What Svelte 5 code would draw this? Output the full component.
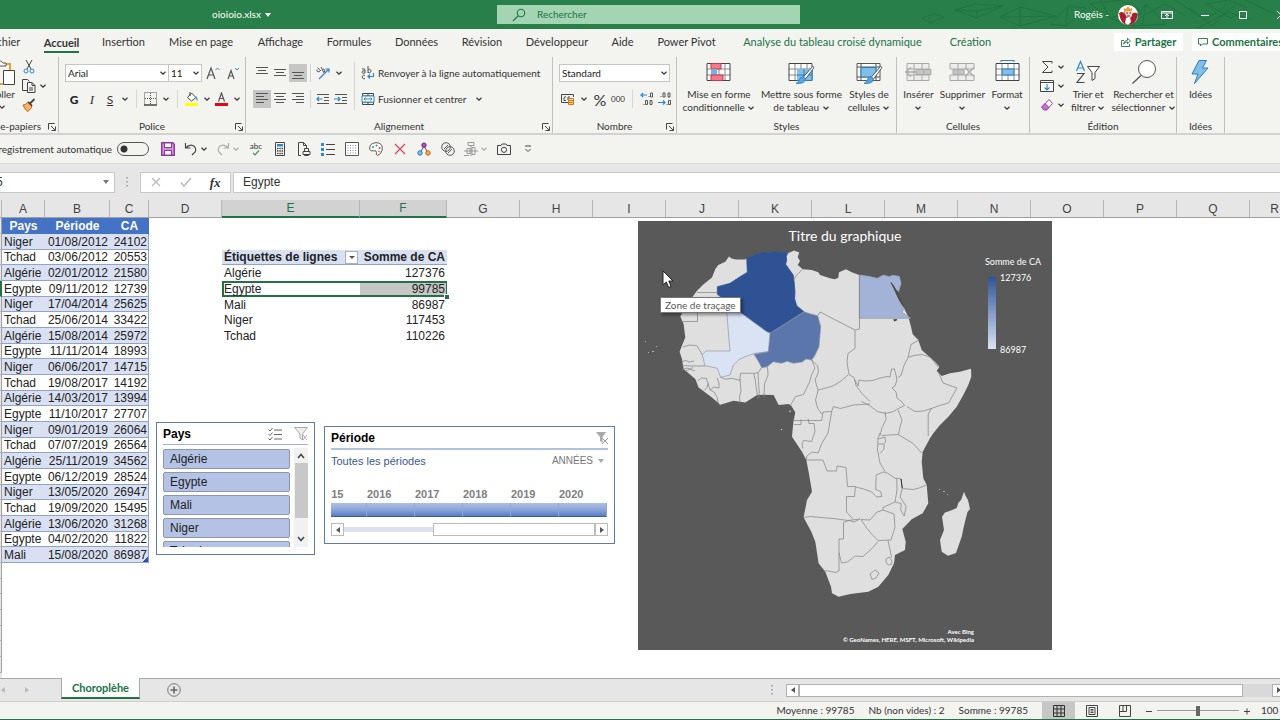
<script>
  const tabs = [
    'Fichier', 'Accueil', 'Insertion', 'Mise en page', 'Affichage', 'Formules', 'Données',
    'Révision', 'Développeur', 'Aide', 'Power Pivot', 'Analyse du tableau croisé dynamique', 'Création'
  ];
  const contextTabs = ['Analyse du tableau croisé dynamique', 'Création'];

  const columns = 'ABCDEFGHIJKLMNOPQR'.split('');
  const rowNumbers = Array.from({ length: 29 }, (_, i) => i + 1);

  const records = [
    ['Niger', '01/08/2012', 24102],
    ['Tchad', '03/06/2012', 20553],
    ['Algérie', '02/01/2012', 21580],
    ['Egypte', '09/11/2012', 12739],
    ['Niger', '17/04/2014', 25625],
    ['Tchad', '25/06/2014', 33422],
    ['Algérie', '15/08/2014', 25972],
    ['Egypte', '11/11/2014', 18993],
    ['Niger', '06/06/2017', 14715],
    ['Tchad', '19/08/2017', 14192],
    ['Algérie', '14/03/2017', 13994],
    ['Egypte', '11/10/2017', 27707],
    ['Niger', '09/01/2019', 26064],
    ['Tchad', '07/07/2019', 26564],
    ['Algérie', '25/11/2019', 34562],
    ['Egypte', '06/12/2019', 28524],
    ['Niger', '13/05/2020', 26947],
    ['Tchad', '19/09/2020', 15495],
    ['Algérie', '13/06/2020', 31268],
    ['Egypte', '04/02/2020', 11822],
    ['Mali', '15/08/2020', 86987]
  ];

  // pivot table starts on row 4, under its header
  const pivot = {
    4: ['Algérie', 127376],
    5: ['Egypte', 99785],
    6: ['Mali', 86987],
    7: ['Niger', 117453],
    8: ['Tchad', 110226]
  };

  const countries = ['Algérie', 'Egypte', 'Mali', 'Niger', 'Tchad'];
  const years = ['2015', '2016', '2017', '2018', '2019', '2020'];
  const selectedRow = 5;

  let autoSave = $state(false);
  let zoom = $state(100);
</script>

{#snippet chev()}
  <svg class="chev" width="8" height="8" viewBox="0 0 8 8"><path d="M1.5 2.8 4 5.2 6.5 2.8" fill="none" stroke="currentColor" stroke-width="1.2" /></svg>
{/snippet}

{#snippet launcher()}
  <button class="launcher" aria-label="Plus d'options">
    <svg width="8" height="8" viewBox="0 0 8 8"><path d="M.5 6.5V.5h6M3 3l4 4M7.5 3.5v4h-4" fill="none" stroke="#444" /></svg>
  </button>
{/snippet}

{#snippet lines(rows)}
  <svg width="14" height="14" viewBox="0 0 14 14">
    {#each rows as [x, y, w]}
      <path d="M{x} {y}.5h{w}" stroke="#555" />
    {/each}
  </svg>
{/snippet}

{#snippet tableGrid()}
  <path d="M1 3.5h23v17H1z" fill="#fff" />
  <path d="M1 9h23M1 15h23M7 3.5v17M13 3.5v17M19 3.5v17" stroke="#888" />
  <path d="M1 3.5h23v17H1z" fill="none" stroke="#444" />
{/snippet}

{#snippet brush()}
  <path d="M25.300 6.500q.8.600.3 1.700L17.500 19l-2.200-1.800L24 7q.7-.8 1.300-.5z" fill="#fff" stroke="#555" />
  <path d="M15 16.800l2.400 2q.2 5.200-9.400 4.700 2.500-1 3.200-3.600.8-3 3.800-3.100z" fill="#5aa5e0" stroke="#2b7cbf" stroke-width=".8" />
{/snippet}

<div class="viewport">
  <div class="window">
    <header class="titlebar">
      <div class="filename">oioioio.xlsx <svg width="6" height="4" viewBox="0 0 6 4"><path d="M0 0h6L3 4z" fill="#fff" /></svg></div>
      <label class="search">
        <svg width="14" height="14" viewBox="0 0 14 14"><path d="M1 13l5-5M5.300 5a3.700 3.700 0 1 0 7.400 0 3.700 3.700 0 0 0-7.400 0" fill="none" stroke="#217346" stroke-width="1.100" /></svg>
        <input type="text" placeholder="Rechercher" />
      </label>
      <div class="account">
        <svg class="pattern" width="380" height="29" viewBox="0 0 380 29" fill="none" stroke="#1e6c3d">
          <path d="M22 18l12-4 10 3-14 6zM55 10l20-6 28 2-26 12zM55 10l22 1 26-5M77 11v7M100 17l20-10 36 9-36 10zM120 7v19M100 17l56-1M150 24l18-18 18 2-20 18zM168 6l-2 20M190 4l30-4 20 10-30 8zM200 0l10 18 22 8M232 26l14-22 20 20zM246 4l-4 22M225 26l40-22 20 12M275 0l30 20 20-14M298 28l30-16 24 8M307 4l22-4 18 8-16 10zM345 0l30 14M290 8l22 18 24-22" />
        </svg>
        <span class="user">Rogéis -</span>
        <svg class="avatar" width="22" height="22" viewBox="0 0 22 22">
          <circle cx="11" cy="11" r="10" fill="#fff" />
          <path d="M2 9q4-3 7 2l4 1q4-6 8-2-1 6-4 9-6 4-11 0-3-3-4-10z" fill="#a61f2e" />
          <path d="M7 4l2 1 2-3 2 3 2-1v5H7z" fill="#e59a3c" />
          <path d="M8 7h7v5q-3 4-6 0z" fill="#f5d6c0" />
          <path d="M9 14l4-1 1 5-3 3-3-2z" fill="#fff" />
          <path d="M9 9h2M12.500 9h1.500M10 12h3" stroke="#7c2030" />
        </svg>
        <button class="win-btn" aria-label="Options du ruban"><svg width="12" height="10" viewBox="0 0 12 10"><path d="M.5 1.500h11v7H.5zM.5 3h11M6 8V4.500M4 6l2-2 2 2" fill="none" stroke="#fff" /></svg></button>
        <button class="win-btn" aria-label="Réduire"><svg width="10" height="10" viewBox="0 0 10 10"><path d="M1 5.500h8" stroke="#fff" /></svg></button>
        <button class="win-btn" aria-label="Agrandir"><svg width="10" height="10" viewBox="0 0 10 10"><path d="M1.500 1.500h7v7h-7z" fill="none" stroke="#fff" /></svg></button>
        <button class="win-btn" aria-label="Fermer"><svg width="10" height="10" viewBox="0 0 10 10"><path d="M1 1l8 8M9 1 1 9" stroke="#fff" /></svg></button>
      </div>
    </header>

    <nav class="tabs">
      {#each tabs as tab}
        <button class="tab" class:active={tab === 'Accueil'} class:context={contextTabs.includes(tab)}><span>{tab}</span></button>
      {/each}
      <div class="share">
        <button class="share-btn">
          <svg width="10" height="10" viewBox="0 0 10 10"><path d="M3 3.500H.5v6h8V7M2.500 7q.5-3.500 4-3.700V1.200L9.500 4l-3 2.700V5Q4 5 2.500 7z" fill="none" stroke="#217346" stroke-width=".9" /></svg>
          Partager
        </button>
        <button class="share-btn comments">
          <svg width="10" height="10" viewBox="0 0 10 10"><path d="M.5 1.500h9v5.500h-5L2.500 9V7h-2z" fill="none" stroke="#217346" stroke-width=".9" /></svg>
          Commentaires
        </button>
      </div>
    </nav>

    <div class="ribbon">
      <section class="group clipboard">
        <div class="body">
          <button class="big paste">
            <svg width="28" height="26" viewBox="0 0 28 26">
              <path d="M3 4h19v6M3 4v20h12" fill="none" stroke="#e2a33d" stroke-width="2" />
              <path d="M7 6V3h3q2.500-4 5 0h3v3z" fill="#fff" stroke="#555" />
              <path d="M15.500 10.500h11v14h-11z" fill="#fff" stroke="#444" />
            </svg>
            <span>Coller</span>
            {@render chev()}
          </button>
          <div class="mini-stack">
            <button aria-label="Couper"><svg width="14" height="14" viewBox="0 0 14 14"><path d="M4 0l5 9M10 0 5 9" stroke="#444" fill="none" /><circle cx="4" cy="11" r="2" fill="none" stroke="#2f86c9" /><circle cx="10" cy="11" r="2" fill="none" stroke="#2f86c9" /></svg></button>
            <button aria-label="Copier"><svg width="14" height="14" viewBox="0 0 14 14"><path d="M5 11.500H.5v-11h5l2 2M5.500 3.500h4.500l3 3v7H5.500zM10 3.500v3h3M7 9h4M7 11h4" fill="none" stroke="#444" /></svg>{@render chev()}</button>
            <button aria-label="Reproduire la mise en forme"><svg width="14" height="14" viewBox="0 0 14 14"><path d="M12.500 1 8 5.500M6 4l4 4" stroke="#444" stroke-width="1.800" /><path d="M5.500 4.500 10 9l-4 4.500Q3 12 1 7q3 0 4.500-2.500z" fill="#f6b26b" stroke="#c8661c" /></svg></button>
          </div>
        </div>
        <footer><span>Presse-papiers</span>{@render launcher()}</footer>
      </section>

      <section class="group font">
        <div class="body rows">
          <div class="row">
            <div class="combo family"><select aria-label="Police"><option>Arial</option></select>{@render chev()}</div>
            <div class="combo size"><select aria-label="Taille"><option>11</option></select>{@render chev()}</div>
            <button class="ico wide" aria-label="Agrandir la police"><svg width="14" height="14" viewBox="0 0 14 14" fill="none"><path d="M1 13 5 2l4 11M2.500 9h5" stroke="#555" stroke-width="1.200" /><path d="M9.500 4l2-2 2 2" stroke="#2f86c9" /></svg></button>
            <button class="ico" aria-label="Réduire la police"><svg width="14" height="14" viewBox="0 0 14 14" fill="none"><path d="M2 13 5 4.500 8 13M3 10h4" stroke="#555" stroke-width="1.200" /><path d="M9 2l2 2 2-2" stroke="#2f86c9" /></svg></button>
          </div>
          <div class="row">
            <button class="ico bold" aria-label="Gras">G</button>
            <button class="ico italic" aria-label="Italique">I</button>
            <button class="ico underline" aria-label="Souligné">S</button>
            <button class="drop" aria-label="Options de soulignement">{@render chev()}</button>
            <i class="sep"></i>
            <button class="ico" aria-label="Bordures"><svg width="14" height="14" viewBox="0 0 14 14"><path d="M.5 12.500V.5h12v12M6.500 1v12M1 6.500h12" fill="none" stroke="#555" stroke-dasharray="1 1" /><path d="M0 13h13" stroke="#444" stroke-width="1.500" /></svg></button>
            <button class="drop" aria-label="Options de bordures">{@render chev()}</button>
            <i class="sep"></i>
            <button class="ico" aria-label="Remplissage"><svg width="14" height="14" viewBox="0 0 14 14"><path d="M6.500 1 11 5.500 6.500 9 2.500 5.500zM5 0v4" fill="#fff" stroke="#444" /><path d="M11 4q2.500 3 1 5-1-1-1-5z" fill="#2f86c9" /><path d="M0 11h13v3H0z" fill="#ff0" /></svg></button>
            <button class="drop" aria-label="Couleurs de remplissage">{@render chev()}</button>
            <button class="ico" aria-label="Couleur de police"><svg width="14" height="14" viewBox="0 0 14 14"><path d="M3.500 9.500 6.500 1l3 8.500M4.500 6.500h4" fill="none" stroke="#555" stroke-width="1.200" /><path d="M0 11h13v3H0z" fill="#e30613" /></svg></button>
            <button class="drop" aria-label="Couleurs de police">{@render chev()}</button>
          </div>
        </div>
        <footer><span>Police</span>{@render launcher()}</footer>
      </section>

      <section class="group align">
        <div class="body align-body">
          <div class="rows left">
            <div class="row">
              <button class="ico" aria-label="Aligner en haut">{@render lines([[1, 1, 12], [3, 4, 8], [1, 7, 12]])}</button>
              <button class="ico" aria-label="Aligner au centre">{@render lines([[1, 3, 12], [3, 6, 8], [1, 9, 12]])}</button>
              <button class="ico pressed" aria-label="Aligner en bas">{@render lines([[1, 6, 12], [3, 9, 8], [1, 12, 12]])}</button>
              <i class="sep"></i>
              <button class="ico" aria-label="Orientation"><svg width="14" height="14" viewBox="0 0 14 14"><path d="M3 13 13 3M9.500 3H13v3.500" fill="none" stroke="#2f86c9" stroke-width="1.200" /><path d="M1 3.500a1.600 1.600 0 1 0 3 1M1.500 1.500 5 5M5 1l3 6M6 4a1.500 1.500 0 1 1 2 2" fill="none" stroke="#555" /></svg></button>
              <button class="drop" aria-label="Options d'orientation">{@render chev()}</button>
            </div>
            <div class="row">
              <button class="ico pressed" aria-label="Aligner à gauche">{@render lines([[1, 1, 12], [1, 4, 8], [1, 7, 12], [1, 10, 8]])}</button>
              <button class="ico" aria-label="Centrer">{@render lines([[1, 1, 12], [3, 4, 8], [1, 7, 12], [3, 10, 8]])}</button>
              <button class="ico" aria-label="Aligner à droite">{@render lines([[1, 1, 12], [5, 4, 8], [1, 7, 12], [5, 10, 8]])}</button>
              <i class="sep"></i>
              <button class="ico" aria-label="Diminuer le retrait"><svg width="14" height="14" viewBox="0 0 14 14"><path d="M1 2.500h12M8 5.500h5M8 8.500h5M1 11.500h12" stroke="#555" /><path d="M6.500 7H1M3 5 1 7l2 2" fill="none" stroke="#2f86c9" stroke-width="1.200" /></svg></button>
              <button class="ico" aria-label="Augmenter le retrait"><svg width="14" height="14" viewBox="0 0 14 14"><path d="M1 2.500h12M8 5.500h5M8 8.500h5M1 11.500h12" stroke="#555" /><path d="M0 7h6M4 5l2 2-2 2" fill="none" stroke="#2f86c9" stroke-width="1.200" /></svg></button>
            </div>
          </div>
          <i class="sep tall"></i>
          <div class="rows">
            <button class="row text-btn">
              <svg width="14" height="14" viewBox="0 0 14 14" fill="none" stroke="#555"><path d="M1 3q3-1 3 1v3q-3 1-3-.8T4 4.700M7 0v7M7 4a1.700 1.700 0 1 1 0 2M4 9.500a1.800 1.800 0 1 0 0 3" /><path d="M12.500 7v3.500H7M9 8.500l-2 2 2 2" stroke="#2f86c9" stroke-width="1.200" /></svg>
              Renvoyer à la ligne automatiquement
            </button>
            <button class="row text-btn">
              <svg width="14" height="14" viewBox="0 0 14 14" fill="none"><path d="M1.500 1.500h11v11h-11zM1.500 4h11M1.500 10h11M7 1.500V4M7 10v2.500" stroke="#444" /><path d="M1 4h12v6H1z" fill="#fff" stroke="#2f86c9" /><path d="M3 7h8M4.500 5.500 3 7l1.500 1.500M9.500 5.500 11 7 9.500 8.500" stroke="#2f86c9" /></svg>
              Fusionner et centrer
              <span class="merge-chev">{@render chev()}</span>
            </button>
          </div>
        </div>
        <footer><span>Alignement</span>{@render launcher()}</footer>
      </section>

      <section class="group number">
        <div class="body rows">
          <div class="row">
            <div class="combo format"><select aria-label="Format de nombre"><option>Standard</option></select>{@render chev()}</div>
          </div>
          <div class="row">
            <button class="ico" aria-label="Format comptable"><svg width="14" height="14" viewBox="0 0 14 14"><path d="M8 10.500H.5v-8h12V5M5 4.500q-3 0-2 4h2M7 8V5h2" fill="none" stroke="#444" /><path d="M7.500 6.500h5v6h-5zM7.500 8.500h5M7.500 10.500h5" fill="#fbd7a5" stroke="#d9761a" /></svg></button>
            <button class="drop" aria-label="Formats comptables">{@render chev()}</button>
            <button class="ico percent" aria-label="Style de pourcentage">%</button>
            <button class="ico thousands" aria-label="Séparateur de milliers">000</button>
            <i class="sep"></i>
            <button class="ico" aria-label="Ajouter une décimale"><svg width="14" height="14" viewBox="0 0 14 14" fill="none" stroke="#555"><path d="M7 3H1M3 1 1 3l2 2" stroke="#2f86c9" stroke-width="1.200" /><path d="M9 5V4M10.500 1h2v4h-2zM4 13v-1M5.500 8.500h2v4h-2zM10 8.500h2v4h-2z" /></svg></button>
            <button class="ico" aria-label="Réduire les décimales"><svg width="14" height="14" viewBox="0 0 14 14" fill="none" stroke="#555"><path d="M3 5V4M5 1h2v4H5zM10 1h2v4h-2zM9 13v-1M10.500 8.500h2v4h-2z" /><path d="M0 10.500h7M5 8.500l2 2-2 2" stroke="#2f86c9" stroke-width="1.200" /></svg></button>
          </div>
        </div>
        <footer><span>Nombre</span>{@render launcher()}</footer>
      </section>

      <section class="group styles">
        <div class="body bigs">
          <button class="big">
            <svg width="25" height="24" viewBox="0 0 25 24">{@render tableGrid()}<path d="M5 3.500h10v5.500H5z" fill="#f5788a" stroke="#c43b50" /><path d="M5 9h6v6H5z" fill="#6fb3e8" /><path d="M5 15h12v5.500H5z" fill="#f5788a" stroke="#c43b50" /></svg>
            <span>Mise en forme<br />conditionnelle {@render chev()}</span>
          </button>
          <button class="big">
            <svg width="27" height="24" viewBox="0 0 27 24">{@render tableGrid()}<path d="M9 9h15v11.500H9z" fill="#83bdea" /><path d="M16 9v11M9 15h15M24 9v11.500H9" fill="none" stroke="#2b7cbf" />{@render brush()}</svg>
            <span>Mettre sous forme<br />de tableau {@render chev()}</span>
          </button>
          <button class="big">
            <svg width="27" height="24" viewBox="0 0 27 24"><path d="M1 3.500h23v17H1zM1 7h23M1 17h23M5 3.500v17M20 3.500v17" fill="#fff" stroke="#555" /><path d="M5 7.500h15v9.500H5z" fill="#83bdea" stroke="#2b7cbf" />{@render brush()}</svg>
            <span>Styles de<br />cellules {@render chev()}</span>
          </button>
        </div>
        <footer><span>Styles</span></footer>
      </section>

      <section class="group cells">
        <div class="body bigs">
          <button class="big">
            <svg width="27" height="24" viewBox="0 0 27 24" fill="#ededeb" stroke="#aaa"><path d="M2 3.500h22v17H2zM2 9h22M2 15h22M9 3.500v17M17 3.500v17" /><path d="M11 9.500h15v5H11zM19 9.500v5" fill="#c4c4c4" /><path d="M11 12H1M6 7.500.8 12 6 16.500" fill="none" stroke-width="1.300" /></svg>
            <span>Insérer<br />{@render chev()}</span>
          </button>
          <button class="big">
            <svg width="27" height="24" viewBox="0 0 27 24" fill="#ededeb" stroke="#aaa"><path d="M1 3.500h24v5.500H1zM1 15h24v5.500H1zM9 3.500V9M17 3.500V9M9 15v5.500M17 15v5.500" /><path d="M4 9.500h11v5H4zM9 9.500v5" fill="#c4c4c4" /><path d="M16 7.500l9 9M25 7.500l-9 9" fill="none" stroke-width="1.300" /></svg>
            <span>Supprimer<br />{@render chev()}</span>
          </button>
          <button class="big">
            <svg width="25" height="24" viewBox="0 0 25 24">{@render tableGrid()}<path d="M7 9h12v6H7z" fill="#83bdea" stroke="#2b7cbf" /><path d="M6 .5h13M6 0v2M19 0v2" stroke="#2f86c9" /></svg>
            <span>Format<br />{@render chev()}</span>
          </button>
        </div>
        <footer><span>Cellules</span></footer>
      </section>

      <section class="group editing">
        <div class="body edit-body">
          <div class="mini-stack">
            <button aria-label="Somme automatique"><svg width="14" height="14" viewBox="0 0 14 14"><path d="M12 3.500v-2H2.500L8 7l-5.500 5.500H12v-2" fill="none" stroke="#444" /></svg>{@render chev()}</button>
            <button aria-label="Recopier"><svg width="14" height="14" viewBox="0 0 14 14"><path d="M.5 1.500h13v11H.5zM.5 3.500h13" fill="#fff" stroke="#444" /><path d="M7 5v6M4.500 8.500 7 11l2.500-2.500" fill="none" stroke="#2f86c9" stroke-width="1.200" /></svg>{@render chev()}</button>
            <button aria-label="Effacer"><svg width="14" height="14" viewBox="0 0 14 14"><path d="M9 1.500l3.500 4-6 6.500-4-3.500z" fill="#fff" stroke="#9b3fa8" /><path d="M5 5.500l4 4L6.500 12H4L1.500 9z" fill="#c274cc" stroke="#9b3fa8" /></svg>{@render chev()}</button>
          </div>
          <button class="big sort">
            <svg width="26" height="24" viewBox="0 0 26 24" fill="none"><path d="M1.500 11 5.500 1.500 9.500 11M3 8h5" stroke="#2f86c9" stroke-width="1.200" /><path d="M2 13.500h7L2 22.500h7.500" stroke="#444" stroke-width="1.200" /><path d="M12.500 6.500h12l-4.500 6v6l-3 2v-8z" fill="#fff" stroke="#444" /></svg>
            <span>Trier et<br />filtrer {@render chev()}</span>
          </button>
          <button class="big find">
            <svg width="26" height="24" viewBox="0 0 26 24"><circle cx="16" cy="9" r="8.500" fill="#fff" stroke="#555" /><path d="M10 15.500 1.500 23.500" stroke="#555" stroke-width="1.200" /></svg>
            <span>Rechercher et<br />sélectionner {@render chev()}</span>
          </button>
        </div>
        <footer><span>Édition</span></footer>
      </section>

      <section class="group ideas">
        <div class="body bigs">
          <button class="big">
            <svg width="20" height="24" viewBox="0 0 20 24"><path d="M9 .5h7.500l-4 7.500h5.500L4.500 23.500 8 14H2z" fill="#83bdea" stroke="#2b7cbf" /></svg>
            <span>Idées</span>
          </button>
        </div>
        <footer><span>Idées</span></footer>
      </section>
    </div>

    <div class="quick">
      <label class="autosave">Enregistrement automatique <input type="checkbox" bind:checked={autoSave} /></label>
      <button aria-label="Enregistrer"><svg width="14" height="14" viewBox="0 0 14 14"><path d="M.7 .7h11l1.600 1.600v11H.7z" fill="#d98be0" stroke="#8b3a9b" stroke-width="1.400" /><path d="M3.500 1h7v4.500h-7zM3.500 8.500h7V13h-7z" fill="#fff" stroke="#8b3a9b" /></svg></button>
      <button class="with-drop" aria-label="Annuler"><svg width="14" height="14" viewBox="0 0 14 14"><path d="M1.500 1v5h5M1.500 6q5-5 9-1.500 3 4-1 7L8 13" fill="none" stroke="#444" stroke-width="1.200" /></svg>{@render chev()}</button>
      <button class="with-drop muted" aria-label="Rétablir"><svg width="14" height="14" viewBox="0 0 14 14"><path d="M12.500 1v5h-5M12.500 6q-5-5-9-1.500-3 4 1 7L6 13" fill="none" stroke="#aaa" stroke-width="1.200" /></svg>{@render chev()}</button>
      <button class="spell" aria-label="Orthographe"><span>abc</span><svg width="8" height="6" viewBox="0 0 8 6"><path d="M1 3l2 2 4-4.500" fill="none" stroke="#3a9b4b" stroke-width="1.200" /></svg></button>
      <button aria-label="Calculatrice"><svg width="12" height="14" viewBox="0 0 12 14"><path d="M1.500.5h9v13h-9z" fill="#fff" stroke="#444" /><path d="M3 2h6v2.500H3z" fill="#2f86c9" /><path d="M3 6.500h1.500M5.300 6.500h1.500M7.500 6.500H9M3 9h1.500M5.300 9h1.500M7.500 9H9M3 11.500h1.500M5.300 11.500h1.500M7.500 11.500H9" stroke="#444" stroke-width="1.500" /></svg></button>
      <button aria-label="Aperçu avant impression"><svg width="14" height="14" viewBox="0 0 14 14" fill="none" stroke="#444"><path d="M4 13.500H1.500V.5h5l3 3V6M6.500.5v3h3" /><path d="M6 9.500h7v3H6zM7.500 9V6.500h4V9M7.500 12v1.500h4V12" /></svg></button>
      <button aria-label="Liste à puces"><svg width="14" height="14" viewBox="0 0 14 14"><path d="M5 2.500h9M5 7.500h9M5 12.500h9" stroke="#444" /><path d="M0 1h3v3H0zM0 6h3v3H0zM0 11h3v3H0z" fill="#2f86c9" /></svg></button>
      <button aria-label="Quadrillage"><svg width="14" height="14" viewBox="0 0 14 14"><path d="M.5.500h13v13H.5z" fill="#fff" stroke="#555" /><path d="M2.500 3.500h10M2.500 6h10M2.500 8.500h10M2.500 11h10" stroke="#888" stroke-dasharray="1 1.500" /></svg></button>
      <button aria-label="Couleurs"><svg width="14" height="14" viewBox="0 0 14 14"><path d="M7 .7q6 0 6.300 5.300Q13 12 8.500 13.300q-2-.3-1-2.800 0-2.500-3-1.700Q.7 9.500.7 6 1 1 7 .7z" fill="#fff" stroke="#555" /><circle cx="4" cy="5" r="1" fill="#3a9b4b" /><circle cx="7.500" cy="3.500" r="1" fill="#2f86c9" /><circle cx="10.500" cy="6" r="1" fill="#c43b50" /><circle cx="10" cy="9.500" r="1" fill="#e08a2c" /></svg></button>
      <button aria-label="Supprimer"><svg width="12" height="12" viewBox="0 0 12 12"><path d="M1 1l10 10M11 1 1 11" stroke="#e04858" stroke-width="1.300" /></svg></button>
      <button aria-label="Relations"><svg width="14" height="14" viewBox="0 0 14 14"><path d="M7 4 3 11M7 4l4 7" stroke="#555" /><circle cx="7" cy="3.200" r="2.200" fill="#b04cc0" stroke="#7a2c88" /><circle cx="3" cy="11" r="2.200" fill="#7cc0f0" stroke="#2b7cbf" /><circle cx="11" cy="11" r="2.200" fill="#f4a94c" stroke="#c8661c" /></svg></button>
      <button aria-label="Formes"><svg width="14" height="14" viewBox="0 0 14 14" fill="none" stroke="#555"><circle cx="5" cy="5" r="4.300" /><circle cx="9" cy="9" r="4.300" /><path d="M3 7l4-4M7 11l4-4" /></svg></button>
      <button class="with-drop muted" aria-label="Aligner les objets"><svg width="14" height="14" viewBox="0 0 14 14" fill="none" stroke="#999"><path d="M4 .5h6v3H4zM3 6.500h3v5H3zM8 5.500h3v7H8zM0 9h14M7 4v10M0 13.500h5" /></svg>{@render chev()}</button>
      <button aria-label="Capture"><svg width="14" height="12" viewBox="0 0 14 12" fill="none" stroke="#444"><path d="M.5 2.500H4l1-1.500h4l1 1.500h3.500v9H.5z" /><circle cx="7" cy="6.800" r="2.600" /></svg></button>
      <button aria-label="Personnaliser la barre"><svg width="8" height="8" viewBox="0 0 8 8"><path d="M1 1h6M1.500 4 4 6.500 6.500 4" fill="none" stroke="#444" /></svg></button>
    </div>

    <div class="formula-bar">
      <div class="name-box">
        <input type="text" value="E5" aria-label="Zone Nom" />
        <svg width="6" height="4" viewBox="0 0 6 4"><path d="M0 0h6L3 4z" fill="#777" /></svg>
      </div>
      <svg class="grip" width="2" height="10" viewBox="0 0 2 10"><path d="M1 0v10" stroke="#999" stroke-width="1.500" stroke-dasharray="1.500 2.500" /></svg>
      <div class="fx">
        <button aria-label="Annuler la saisie"><svg width="10" height="10" viewBox="0 0 10 10"><path d="M1 1l8 8M9 1 1 9" stroke="#bbb" stroke-width="1.300" /></svg></button>
        <button aria-label="Valider"><svg width="12" height="10" viewBox="0 0 12 10"><path d="M1 5.500 4 9l7-8" fill="none" stroke="#bbb" stroke-width="1.500" /></svg></button>
        <button class="fn" aria-label="Insérer une fonction">fx</button>
      </div>
      <input class="formula" type="text" value="Egypte" aria-label="Barre de formule" />
    </div>

    <main class="sheet">
      <table>
        <colgroup>
          <col class="w-head" /><col class="w-a" /><col class="w-b" /><col class="w-c" /><col class="w-std" /><col class="w-e" /><col class="w-f" />
          {#each columns.slice(6, 17) as _}<col class="w-std" />{/each}
          <col />
        </colgroup>
        <thead>
          <tr>
            <th></th>
            {#each columns as col}
              <th class:picked={col === 'E' || col === 'F'}>{col}</th>
            {/each}
          </tr>
        </thead>
        <tbody>
          {#each rowNumbers as n}
            <tr>
              <th class:picked={n === selectedRow}></th>
              {#if n === 1}
                <td class="head">Pays</td><td class="head">Période</td><td class="head">CA</td>
              {:else if records[n - 2]}
                {@const [country, date, amount] = records[n - 2]}
                <td class="rec" class:band={n % 2 === 0}>{country}</td>
                <td class="rec num" class:band={n % 2 === 0}>{date}</td>
                <td class="rec num end" class:band={n % 2 === 0} class:corner={n === records.length + 1}>{amount}</td>
              {:else}
                <td colspan="3"></td>
              {/if}
              <td></td>
              {#if n === 3}
                <td class="pivot-head">
                  <div>Étiquettes de lignes <button aria-label="Filtrer"><svg width="6" height="3" viewBox="0 0 6 3"><path d="M0 0h6L3 3z" fill="#555" /></svg></button></div>
                </td>
                <td class="pivot-head num">Somme de CA</td>
              {:else if pivot[n]}
                <td class:sel-start={n === selectedRow}>{pivot[n][0]}</td>
                <td class="num" class:sel-end={n === selectedRow}>{pivot[n][1]}</td>
              {:else}
                <td></td><td></td>
              {/if}
              <td colspan="12"></td>
            </tr>
          {/each}
        </tbody>
      </table>

      <section class="slicer">
        <header>
          <h2>Pays</h2>
          <button aria-label="Sélection multiple"><svg width="14" height="12" viewBox="0 0 14 12" fill="none" stroke="#666"><path d="M6 2h8M6 6.500h8M6 11h8" /><path d="M.5 1.500 2 3 4.500 0M.5 6 2 7.500 4.500 4.500M.5 10.500 2 12 4.500 9" /></svg></button>
          <button aria-label="Effacer le filtre"><svg width="14" height="14" viewBox="0 0 14 14" fill="none" stroke="#aaa"><path d="M.5.500h13L8.500 7v6L6 11V7z" fill="#eee" /><path d="M9 8l4 5M13 8l-4 5" /></svg></button>
        </header>
        <div class="slicer-body">
          <div class="items">
            {#each countries as country}
              <button>{country}</button>
            {/each}
          </div>
          <div class="vscroll">
            <svg width="8" height="6" viewBox="0 0 8 6"><path d="M1 5l3-3.500L7 5" fill="none" stroke="#444" stroke-width="1.500" /></svg>
            <div class="vthumb"></div>
            <svg width="8" height="6" viewBox="0 0 8 6"><path d="M1 1l3 3.500L7 1" fill="none" stroke="#444" stroke-width="1.500" /></svg>
          </div>
        </div>
      </section>

      <section class="timeline">
        <header>
          <h2>Période</h2>
          <button aria-label="Effacer le filtre"><svg width="12" height="12" viewBox="0 0 12 12"><path d="M0 0h10L6.500 5v6L4 9V5z" fill="#aaa" /><path d="M6 6l6 6M12 6l-6 6" stroke="#999" /></svg></button>
        </header>
        <div class="range">
          <span>Toutes les périodes</span>
          <button>ANNÉES <svg width="6" height="4" viewBox="0 0 6 4"><path d="M0 0h6L3 4z" fill="#aaa" /></svg></button>
        </div>
        <div class="years">
          {#each years as year}
            <div class="year"><span>{year}</span><i></i></div>
          {/each}
        </div>
        <div class="tscroll">
          <button aria-label="Précédent"><svg width="4" height="6" viewBox="0 0 4 6"><path d="M4 0v6L0 3z" fill="#555" /></svg></button>
          <div class="track"></div>
          <div class="thumb"></div>
          <button aria-label="Suivant"><svg width="4" height="6" viewBox="0 0 4 6"><path d="M0 0v6l4-3z" fill="#555" /></svg></button>
        </div>
      </section>

      <section class="chart">
        <svg width="414" height="429" viewBox="638 221 414 429">
          <defs>
            <linearGradient id="scale" x1="0" y1="0" x2="0" y2="1">
              <stop offset="0" stop-color="#2f5597" />
              <stop offset="1" stop-color="#dae3f3" />
            </linearGradient>
          </defs>
          <text class="chart-title" x="845" y="241" text-anchor="middle">Titre du graphique</text>

          <!-- mainland and Madagascar -->
          <g fill="#dfdfdf">
            <path d="M729 256.500l2.500 2 4.500 1h9l1.700-1 11.600-5 15-1.300 15 .3h1.700l4-2 5.300 2-1.600 4.400L800 261l-2.300 4 5 4.300 9 .7 6.600 2.300 1.700 2.700 10 3.300 5 1 3.300-1.600.7-5.400 7-3 5.700 3 7.600 2.700 9 1.300 9 2 6-3.300 6 1.700 3.300-1.400 6.700 1 1.700 7-2.300 8.400-3.700-3.400-4-5.600 4 9 9 16.600 4.300 8.400 2.700 10 1.700 7.600 5.600 5.700 3.400 10 5.600 5 7.700 6.700 4.300 5-2.600 4.300 5 5 8.300-2.700 10-1.600 11-3 .3 8-3 8.300-5 10-6.600 11.700-8.400 10-8.300 8.300-6.700 8.300-3.300 5-7.300 13.400-1 10 1.600 16.600 3.400 6.700 1.600 18.300-5.600 10-11 6-9.400 9.700 3.400 12.700-.7 8.300-10 5-1 8.300-5.700 11.700-10 11.700-10 5-8 1-10 1.300-11.700 2.700-6.600-3.400-1-6.600-5.700-15-6.700-8.400-3.300-21.600-4-10-7.700-14.400 3.400-17.300 5-8.300-3.400-20-2.300-11.700-4.300-8.300-10-15 .6-7 1-9 1.700-8.300-4-6.700-2.700-1.600-10 1-5-10-10-.4-6.600.4-11.700 7.300-11.700-1.700-13.300 4-8.300-7.300-13.400-10-3.300-8.300-11.700-10-1.600-10-2.400-7.400 2.700-7 3-7.300-1.700-13.300-3.300-7.700 5-10 6-8 5.700-7.700 6-6 9-7.300 3.300-8.300 3-4 7-3.400z" />
            <path d="M964 491.700l1.500 4 2.500 4.300 2 9-2.500 3-.8 3-3 12-2 9.700-5.700 16.300-8 2.700-6.300-4-1.700-11.700 4-10-2-13.300 3-4.200 6-2 5.700-2.500 1.600-5 3-3.500z" />
            <path d="M789 411.500l1.500-1.500v2.500zM781 429h1v1h-1z" />
          </g>

          <g stroke="#8e97a8" stroke-width=".7">
            <path d="M746.700 258.300 758.300 253.300 773.300 252l15 .3-2 4 .4 4-1 4 4 5.700 3.600 5 1 8 .7 8.700-.3 7 2 7 7.300 6-34 21.600-3.300-1.600L740 312.300l-22.700-18v-7.600L730 283.300l10-6.600 7.300-4.400z" fill="#2f5294" stroke="#2f5294" />
            <path d="M740 312.300 766.700 331.700l4 1.600-.7 15-1.700 3.400-13.300 1.600-10 3.400-6 3-5.700 5.300-3.300 10-9.300 2.300-3.400-9-12.300-2.600-2.700-10.700 3.700-4H730l-3.300-39.300z" fill="#dae3f3" />
            <path d="M770 333.300l34-21.600 6 2 7.700 2 3 11-1.700 20-4.300 9-3 4.300-5.700-1-4 3-8.700 1.300-6-2-6 2-8-1.600-6 5-5.600 1-3-6-4.700-7.400 14.300-2.600z" fill="#5b76ab" />
            <path d="M859.300 275l9 1.300 9 2 6-3.300 6 1.700 3.300-1.400 6.700 1 1.700 7-2.300 8.400-3.700-3.400-4-5.600 4 9 9 16.600-2 4 6 4 2.700 2h-51.400z" fill="#a3b3d8" />
          </g>
          <path d="M891 282.500l3 4 5 10 4.500 10-4-6-4-9z" fill="#595959" stroke="#444" stroke-width=".8" />
          <path d="M893 319.500l3.500-.5 1 1-3 1.500z" fill="#444" />

          <g fill="none" stroke="#7f7f7f" stroke-width=".7" stroke-linejoin="round">
            <path d="M697 292.500h20M681 321.500h16.500V310M683 347l6-2 7.700.7 3.300 5 2.300 4.300M682 361.500l4-1 3 1.500 5-1M682 365.500l10 .5 13 0M682 370l5-2 8 3M685 371.500l8-4" />
            <path d="M697.500 381l4-3 5 .5 1.500 5-1 4-3 3M708 383l2 7 4 2 3 5 1 5 2 4M717 378l2 5v5l-5-1-4 3M720.700 377.300l5 2 6-1 8 2 1-7h13l1.500 6 1 8 2 12M740 379l1 12-1.500 5 .5 8M754 373.500l4-1 .5 9 1 16M758.500 372.500l3-5M767.500 367l.5 8-3.500 9-.5 13.500" />
            <path d="M811.700 360l3.300 8-3.500 7-2 7-6 12.500-8 2-5 9M811.700 360l6 6 .8 6-3.500 8 3 10M818 390l-1 5-1.500 5 2 8 4.200 6M818 390l8-2 7-2 8-5 7-6M855 330.500v18l-7 5-1 8 1 7 1 6 5 3 2 8 6 8 8 8M817.700 315.700l2.300-3.700 35 18 4.500-1V275M802.500 269.300l-6 6-3 5" />
            <path d="M855 380l3 6 1-6 6 1 8-.5 7-2.500 7-1.500 3 .5 1.500-8h3l1.500 6 1 5-2 6-3 2 4 4 1 6 4 3 3.500 4.500-8 4-3 2-8 2-8-2-8-6-8-4" />
            <path d="M821.700 420l1.300-8 8.700-.5 1.600-5 7 2 13-3.500 16.700-1M919 340l-8 4.500-3 13-4 8-3 10-3 2M908 357.500l6-2 8-1 8 2.500 5 6 3 4M938 371l5 12 14 5-8.500 15-9 2.500-8 3-8 2.500-8.500.5-8-5M931.700 408l-3.500 6v22M898 410l4 10-2 7-1.500 7.500M885 411.700l1 8-4 8-2 8M793 420.500h29M794 424.500h7v-5M808 418.500l1 5h5l1 8-3.500 10-8-1-1.500 4 1 4M831.700 411.700 828 433l-6 10-4 10-6-1-5 4-1 4h17l4 11h9.500l.5-5 9 1.500 1.500 19h8l-1 10h-8V512l6 6.500" />
            <path d="M855.700 487l8 2 8 3 5 5 5-.5-1-5-5-2 .5-14.500 7-3 4 1 9 6M880 433l-2 5-.5 12 2.500 13 5 8.500M881.700 435.500l16.500-1 15 9 8.500 9.500M878 439l7-2 .5 5-2 2H878M884 444l0 5-4 4.500" />
            <path d="M896.700 478l4.500 1 1 9-2 9 6 9.500-2 9.500-3.500-6 .5-6.500-6.200-1.500 2-12zM902 488.500l11 1 6-1.500 7.500-3M895 502l-12 5.500v2.500M883 510l11 4 1 13-4 13-13 .5-6-6-5-6-6-9 9 .5 7-8z" />
            <path d="M803.500 517.500l7-1 22.500 2 15 2 12-1.500M860 519l-6 3-5-1.500-5.500 2V539h-4.500v32M825 570.500l6 1 5 1 3-2M839 553l2.500 10 6-1 7.500-6 8 .5 9-8 6-7M888 540.500l2 9 1.500 8M886 559l3-2 2.500 3 .5 4-4 1-2-3zM870 574l5-4 4 3-3 5-4 1.500z" />
          </g>
          <path d="M901 479l1.200 9" stroke="#333" />
          <path d="M645 341h1v1h-1zM648 352h1v1h-1zM652 351h2v1h-2zM656 346h1v1h-1zM939 489h1v1h-1zM943 491h2v1h-2zM947 494h1v1h-1z" fill="#b5b5b5" />

          <text class="legend" x="1041" y="265" text-anchor="end">Somme de CA</text>
          <rect x="988" y="277" width="8" height="72" fill="url(#scale)" />
          <text class="legend" x="1000" y="281">127376</text>
          <text class="legend" x="1000" y="353">86987</text>
          <text class="credits" x="974" y="634" text-anchor="end">Avec Bing</text>
          <text class="credits" x="974" y="642" text-anchor="end">© GeoNames, HERE, MSFT, Microsoft, Wikipedia</text>
        </svg>
        <svg class="cursor" width="12" height="19" viewBox="0 0 12 19"><path d="M1 1v14l3.300-3 2.400 5.500 2.400-1L6.800 11H11z" fill="#fff" stroke="#222" /></svg>
        <div class="tooltip">Zone de traçage</div>
      </section>
    </main>

    <div class="sheet-tabs">
      <div class="tab-nav">
        <svg width="4" height="6" viewBox="0 0 4 6"><path d="M4 0v6L0 3z" fill="#bbb" /></svg>
        <svg width="4" height="6" viewBox="0 0 4 6"><path d="M0 0v6l4-3z" fill="#bbb" /></svg>
      </div>
      <button class="sheet-tab">Choroplèhe</button>
      <button class="add" aria-label="Nouvelle feuille"><svg width="14" height="14" viewBox="0 0 14 14"><circle cx="7" cy="7" r="6.300" fill="none" stroke="#777" /><path d="M7 3.500v7M3.500 7h7" stroke="#666" stroke-width="1.600" /></svg></button>
      <svg class="grip" width="2" height="10" viewBox="0 0 2 10"><path d="M1 0v10" stroke="#999" stroke-width="1.500" stroke-dasharray="1.500 2.500" /></svg>
      <div class="hscroll">
        <button aria-label="Défiler à gauche"><svg width="4" height="6" viewBox="0 0 4 6"><path d="M4 0v6L0 3z" fill="#555" /></svg></button>
        <div class="hthumb"></div>
        <button aria-label="Défiler à droite"><svg width="4" height="6" viewBox="0 0 4 6"><path d="M0 0v6l4-3z" fill="#555" /></svg></button>
      </div>
    </div>

    <footer class="status">
      <span class="stat">Moyenne : 99785</span>
      <span class="stat">Nb (non vides) : 2</span>
      <span class="stat">Somme : 99785</span>
      <button class="view current" aria-label="Normal"><svg width="12" height="12" viewBox="0 0 12 12"><path d="M.5.500h11v11H.5zM.5 4h11M.5 8h11M4 .5v11M8 .5v11" fill="none" stroke="#333" /></svg></button>
      <button class="view" aria-label="Mise en page"><svg width="12" height="12" viewBox="0 0 12 12"><path d="M.5.500h11v11H.5zM3 2.500h6v7H3zM4.500 4.500h3M4.500 6h3M4.500 7.500h3" fill="none" stroke="#444" /></svg></button>
      <button class="view" aria-label="Aperçu des sauts de page"><svg width="12" height="12" viewBox="0 0 12 12"><path d="M.5 .5h11v11H.5zM.5 6.500h7v-6M4 .5v6" fill="none" stroke="#444" /></svg></button>
      <button class="zoom-btn" aria-label="Zoom arrière"><svg width="8" height="8" viewBox="0 0 8 8"><path d="M1 4.500h6" stroke="#444" /></svg></button>
      <input class="zoom" type="range" min="10" max="190" bind:value={zoom} aria-label="Zoom" />
      <button class="zoom-btn" aria-label="Zoom avant"><svg width="8" height="8" viewBox="0 0 8 8"><path d="M1 4.500h6M4 1.500v6" stroke="#444" /></svg></button>
      <span class="zoom-value">{zoom} %</span>
    </footer>
  </div>
</div>

<style>
  :global(body) {
    margin: 0;
  }

  .viewport {
    overflow: hidden;
    font-family: Lato, 'Open Sans', sans-serif;
    font-size: 10px;
    line-height: 13px;
    color: #333;
  }

  /* the window sits a little wider than the screen on both sides */
  .window {
    display: flex;
    flex-direction: column;
    box-sizing: border-box;
    min-height: 100vh;
    margin: 0 -20px 0 -24px;
    border-bottom: 1px solid #217346;
    background: #f3f3f0;
    white-space: nowrap;
  }

  button {
    display: inline-flex;
    align-items: center;
    justify-content: center;
    padding: 0;
    border: 0;
    background: none;
    color: inherit;
    font: inherit;
  }

  input,
  select {
    box-sizing: border-box;
    margin: 0;
    color: inherit;
    font: inherit;
    outline: none;
  }

  svg {
    flex: none;
  }

  /* title bar */
  .titlebar {
    display: grid;
    grid-template-columns: 521px 303px 1fr;
    align-items: center;
    height: 29px;
    background: #287f49;
    color: #fff;
  }

  .filename {
    display: flex;
    align-items: center;
    gap: 4px;
    padding-left: 236px;
  }

  .search {
    display: flex;
    align-items: center;
    gap: 11px;
    height: 19px;
    padding-left: 15px;
    background: #a3d5b3;
  }

  .search input {
    flex: 1;
    border: 0;
    padding: 0;
    background: none;
  }

  .search input::placeholder {
    color: #217346;
  }

  .account {
    position: relative;
    display: flex;
    align-items: center;
    justify-content: flex-end;
    height: 29px;
    overflow: hidden;
  }

  .account > * {
    position: relative;
  }

  .account .pattern {
    position: absolute;
    right: 20px;
    top: 0;
    opacity: 0.6;
  }

  .user {
    margin-right: 8px;
  }

  .avatar {
    margin-right: 9px;
  }

  .win-btn {
    width: 38px;
    height: 29px;
  }

  /* ribbon tabs */
  .tabs {
    display: grid;
    grid-template-columns: 56px 59px 65px 90px 69px 68px 67px 64px 86px 45px 83px 209px 67px 1fr;
    align-items: center;
    height: 28px;
    padding-bottom: 3px;
    box-sizing: border-box;
    font-size: 11px;
  }

  .tab.active {
    font-weight: 700;
  }

  .tab.active span {
    padding: 5px 0 2px;
    border-bottom: 2px solid #217346;
  }

  .tab.context {
    color: #217346;
  }

  .share {
    display: flex;
    justify-content: flex-end;
    gap: 9px;
    padding-right: 4px;
  }

  .share-btn {
    gap: 4px;
    width: 69px;
    height: 18px;
    background: #fff;
    color: #217346;
    font-weight: 700;
  }

  .share-btn.comments {
    justify-content: flex-start;
    width: 104px;
    padding-left: 6px;
    box-sizing: border-box;
  }

  /* ribbon */
  .ribbon {
    display: flex;
    height: 78px;
    border-bottom: 2px solid #d2d2d0;
    box-sizing: border-box;
  }

  .group {
    display: flex;
    flex-direction: column;
    box-sizing: border-box;
    height: 76px;
    border-right: 1px solid #c0c0be;
  }

  .clipboard { width: 83px; }
  .font { width: 187px; }
  .align { width: 307px; }
  .number { width: 124px; }
  .styles { width: 220px; }
  .cells { width: 133px; }
  .editing { width: 147px; }
  .ideas { width: 48px; }

  .group .body {
    display: flex;
    flex: 1;
    min-height: 0;
  }

  .group footer {
    display: flex;
    align-items: center;
    justify-content: center;
    position: relative;
    height: 13px;
  }

  .launcher {
    position: absolute;
    right: 2px;
    top: 3px;
  }

  .group.clipboard footer {
    justify-content: flex-end;
    padding-right: 17px;
  }

  .group .rows,
  .rows {
    display: flex;
    flex-direction: column;
    gap: 8px;
    padding-top: 7px;
  }

  .row {
    display: flex;
    align-items: center;
    height: 18px;
  }

  .font .row,
  .number .row {
    padding-left: 6px;
  }

  .combo {
    display: grid;
    align-items: center;
    width: 34px;
    height: 18px;
    padding-right: 1px;
    border: 1px solid #c6c6c6;
    box-sizing: border-box;
    background: #fff;
  }

  .combo.family {
    width: 103px;
    border-right: 0;
  }

  .combo.format {
    width: 111px;
  }

  .combo > :global(*) {
    grid-area: 1 / 1;
  }

  .combo select {
    width: 100%;
    height: 16px;
    padding: 0 2px;
    border: 0;
    appearance: none;
    background: none;
    color: #222;
  }

  .chev {
    justify-self: end;
  }

  .ico {
    width: 18px;
    height: 18px;
  }

  .ico.wide {
    width: 22px;
  }

  .ico.pressed {
    background: #c6c6c4;
  }

  .ico.bold {
    font-size: 12px;
    font-weight: 900;
    color: #222;
  }

  .ico.italic {
    font-family: 'Liberation Serif', serif;
    font-size: 13px;
    font-style: italic;
  }

  .ico.underline {
    font-size: 12px;
    text-decoration: underline;
  }

  .ico.percent {
    font-size: 16px;
  }

  .ico.thousands {
    font-size: 8px;
  }

  .drop {
    width: 14px;
    height: 18px;
  }

  .font .drop {
    width: 12px;
  }

  .sep {
    width: 1px;
    height: 18px;
    margin: 0 5px;
    background: #d4d4d2;
  }

  .sep.tall {
    height: 48px;
    margin: 5px 6px 0 0;
  }

  .align-body {
    padding-left: 7px;
  }

  .align-body .left {
    width: 101px;
  }

  .left .sep {
    margin: 0 3px;
  }

  .text-btn {
    justify-content: flex-start;
    gap: 3px;
  }

  .merge-chev {
    display: flex;
    margin-left: 5px;
  }

  .bigs {
    justify-content: space-evenly;
  }

  .big {
    flex-direction: column;
    justify-content: flex-start;
    gap: 4px;
    padding-top: 3px;
    line-height: 13px;
  }

  .big .chev {
    vertical-align: middle;
  }

  .paste {
    gap: 2px;
    margin-left: 12px;
  }

  .mini-stack {
    display: flex;
    flex-direction: column;
    gap: 5px;
    padding: 3px 0 0 6px;
  }

  .mini-stack button {
    justify-content: flex-start;
    gap: 3px;
  }

  .edit-body {
    gap: 6px;
    padding-left: 4px;
  }

  /* quick access toolbar */
  .quick {
    display: flex;
    align-items: center;
    height: 29px;
    border-bottom: 1px solid #d9d9d7;
    box-sizing: border-box;
  }

  .autosave {
    display: flex;
    align-items: center;
    justify-content: flex-end;
    gap: 5px;
    width: 173px;
    margin-right: 7px;
  }

  .autosave input {
    width: 32px;
    height: 14px;
    border: 1px solid #555;
    border-radius: 7px;
    appearance: none;
    background: radial-gradient(circle at 6px 6px, #333 3px, transparent 4px);
  }

  .quick button {
    width: 24px;
    height: 24px;
  }

  .quick .with-drop {
    width: 32px;
    gap: 2px;
  }

  .quick .muted {
    color: #aaa;
  }

  .quick .spell {
    flex-direction: column;
    font-size: 8px;
    line-height: 8px;
  }

  /* formula bar */
  .formula-bar {
    display: flex;
    align-items: center;
    height: 36px;
    background: #e6e6e6;
    font-family: 'Liberation Sans', Arial, sans-serif;
    font-size: 12px;
  }

  .name-box,
  .fx,
  .formula {
    height: 21px;
    border: 1px solid #c9c9c9;
    box-sizing: border-box;
    background: #fff;
  }

  .name-box {
    display: flex;
    align-items: center;
    width: 139px;
    padding-right: 5px;
  }

  .name-box input {
    flex: 1;
    min-width: 0;
    padding: 0 0 0 11px;
    border: 0;
  }

  .formula-bar .grip {
    margin: 0 12px 0 11px;
  }

  .fx {
    display: flex;
    width: 91px;
    margin-right: 2px;
  }

  .fx button {
    flex: 1;
  }

  .fx .fn {
    font-family: 'Liberation Serif', serif;
    font-size: 13px;
    font-style: italic;
    font-weight: 700;
  }

  .formula {
    flex: 1;
    padding: 0 9px;
  }

  /* sheet, with the row header strip running on below the last row */
  .sheet {
    position: relative;
    flex: 1;
    background: linear-gradient(#e6e6e6, #e6e6e6) 0 0 / 26px 100% no-repeat #fff;
    font-family: 'Liberation Sans', Arial, sans-serif;
    font-size: 12px;
    line-height: 14px;
    color: #222;
  }

  table {
    width: 100%;
    table-layout: fixed;
    border-collapse: separate;
    border-spacing: 0;
  }

  .w-head { width: 26px; }
  .w-a { width: 43px; }
  .w-b { width: 65px; }
  .w-c { width: 39px; }
  .w-e { width: 138px; }
  .w-f { width: 87px; }
  .w-std { width: 73px; }

  th,
  td {
    padding: 0 2px;
    box-sizing: border-box;
  }

  thead th {
    height: 18px;
    border-right: 1px solid #b5b5b5;
    border-bottom: 1px solid #a0a0a0;
    background: #e6e6e6;
    color: #444;
    font-weight: 400;
  }

  thead th.picked {
    border-bottom: 2px solid #217346;
    background: #d2d2d2;
    color: #217346;
  }

  tbody tr {
    height: 16px;
  }

  tbody tr:nth-child(3n) {
    height: 15px;
  }

  tbody th {
    border-right: 1px solid #a0a0a0;
    border-bottom: 1px solid #b5b5b5;
    background: #e6e6e6;
  }

  tbody th.picked {
    border-right: 2px solid #217346;
  }

  .head {
    background: #4472c4;
    color: #fff;
    font-weight: 700;
    text-align: center;
  }

  .rec {
    border-bottom: 1px solid #8ea3d0;
  }

  .rec.band {
    background: #d9e0f2;
  }

  .rec.end {
    padding-right: 1px;
    border-right: 1px solid #8ea3d0;
  }

  .rec.corner {
    background: linear-gradient(135deg, transparent 50%, #2f4fa8 50%) right bottom / 5px 5px no-repeat #d9e0f2;
  }

  .num {
    text-align: right;
  }

  .pivot-head {
    border-bottom: 1px solid #8ea3d0;
    background: #d9e0f2;
    font-weight: 700;
  }

  .pivot-head div {
    display: flex;
    align-items: center;
    justify-content: space-between;
  }

  .pivot-head button {
    width: 13px;
    height: 13px;
    border: 1px solid #a8b0c4;
    background: #fff;
  }

  .sel-start {
    box-shadow: inset 0 2px #217346, inset 0 -2px #217346, inset 2px 0 #217346;
  }

  .sel-end {
    position: relative;
    background: #c6c6c6;
    box-shadow: inset 0 2px #217346, inset 0 -2px #217346, inset -1px 0 #217346;
  }

  .sel-end::after {
    content: '';
    position: absolute;
    right: -2px;
    bottom: -2px;
    width: 4px;
    height: 4px;
    border: 1px solid #fff;
    border-width: 1px 0 0 1px;
    background: #217346;
  }

  h2 {
    flex: 1;
    margin: 0;
    font-size: 12px;
    font-weight: 700;
    color: #000;
  }

  /* floating objects over the cells */
  .slicer,
  .timeline {
    position: absolute;
    box-sizing: border-box;
    border: 1px solid #5f7aa8;
    background: #fff;
    padding: 0 6px;
  }

  .slicer {
    left: 180px;
    top: 222px;
    width: 159px;
    height: 133px;
  }

  .slicer header,
  .timeline header {
    display: flex;
    align-items: center;
    gap: 12px;
    height: 21px;
    border-bottom: 1px solid #9fb2d4;
  }

  .slicer-body {
    display: flex;
    gap: 4px;
    height: 99px;
    margin-top: 3px;
    overflow: hidden;
  }

  .items {
    display: flex;
    flex: 1;
    flex-direction: column;
    gap: 3px;
    padding-top: 1px;
  }

  .items button {
    flex: none;
    justify-content: flex-start;
    height: 20px;
    padding-left: 6px;
    box-sizing: border-box;
    border: 1px solid #8c96ac;
    border-radius: 2px;
    background: #b4c3e5;
  }

  .vscroll {
    display: flex;
    flex-direction: column;
    align-items: center;
    width: 14px;
    padding: 5px 0;
    box-sizing: border-box;
    background: #f1f1f1;
  }

  .vthumb {
    width: 13px;
    height: 55px;
    margin: 4px 0 auto;
    background: #c8c8c8;
  }

  .timeline {
    left: 348px;
    top: 226px;
    width: 291px;
    height: 118px;
  }

  .timeline header {
    border-bottom: 2px solid #b0c1dd;
  }

  .range {
    display: flex;
    align-items: center;
    justify-content: space-between;
    height: 22px;
    padding-right: 4px;
    color: #3a5896;
    font-size: 11px;
  }

  .range button {
    gap: 5px;
    color: #777;
    font-size: 10px;
  }

  .years {
    display: flex;
    justify-content: flex-end;
    width: 276px;
    margin-top: 15px;
    overflow: hidden;
  }

  .year {
    flex: none;
    width: 48px;
    color: #808080;
    font-size: 11px;
    font-weight: 700;
  }

  .year i {
    display: block;
    height: 14px;
    margin-top: 2px;
    border-right: 1px solid #8fa5d6;
    border-bottom: 1px solid #3c5fa6;
    box-sizing: border-box;
    background: linear-gradient(#aebfe6, #8ea6da 50%, #5a7cc6);
  }

  .tscroll {
    display: flex;
    align-items: center;
    margin-top: 6px;
  }

  .tscroll button {
    width: 13px;
    height: 13px;
    border: 1px solid #bbb;
    box-sizing: border-box;
  }

  .track {
    flex: 1;
    height: 5px;
    background: #dde0f0;
  }

  .thumb {
    width: 162px;
    height: 13px;
    border: 1px solid #bbb;
    box-sizing: border-box;
  }

  .chart {
    position: absolute;
    left: 662px;
    top: 21px;
    background: #595959;
    font-family: Lato, 'Open Sans', sans-serif;
  }

  .chart > svg {
    display: block;
  }

  .chart text {
    fill: #fff;
  }

  .chart-title {
    font-size: 14px;
  }

  .legend {
    font-size: 9px;
  }

  .credits {
    font-size: 6px;
    font-weight: 700;
  }

  .chart .cursor {
    position: absolute;
    left: 24px;
    top: 49px;
  }

  .tooltip {
    position: absolute;
    left: 22px;
    top: 76px;
    padding: 0 4px;
    border: 1px solid #767676;
    background: #fff;
    box-shadow: 2px 2px 3px rgba(0, 0, 0, 0.4);
    color: #575757;
    font-size: 10px;
  }

  /* sheet tabs */
  .sheet-tabs {
    display: flex;
    align-items: center;
    height: 24px;
    border-top: 1px solid #a8a8a8;
    border-bottom: 1px solid #cfcfcd;
    box-sizing: border-box;
    background: #e6e6e6;
  }

  .tab-nav {
    display: flex;
    gap: 20px;
    width: 60px;
    padding-left: 25px;
  }

  .sheet-tab {
    width: 79px;
    height: 21px;
    margin-bottom: 3px;
    border: 1px solid #a8a8a8;
    border-top: 0;
    border-bottom: 2px solid #217346;
    box-sizing: border-box;
    background: #fff;
    color: #217346;
    font-size: 11px;
    font-weight: 700;
  }

  .add {
    margin: 0 auto 0 27px;
  }

  .sheet-tabs .grip {
    margin-right: 13px;
  }

  .hscroll {
    display: flex;
    justify-content: space-between;
    width: 40%;
    max-width: 499px;
    margin-right: 15px;
    background: #d9d9d9;
  }

  .hscroll button,
  .hthumb {
    width: 13px;
    height: 13px;
    border: 1px solid #b0b0b0;
    box-sizing: border-box;
    background: #fff;
  }

  .hthumb {
    flex: 1;
    margin-right: 29px;
  }

  /* status bar */
  .status {
    display: flex;
    align-items: center;
    justify-content: flex-end;
    height: 17px;
  }

  .stat {
    margin-right: 14px;
  }

  .view {
    width: 33px;
    height: 17px;
  }

  .view.current {
    background: #c6c6c4;
  }

  .zoom-btn {
    width: 16px;
  }

  .zoom {
    width: 82px;
    height: 12px;
    appearance: none;
    background: linear-gradient(#999, #999) center / 100% 1px no-repeat;
  }

  .zoom::-webkit-slider-thumb {
    width: 4px;
    height: 10px;
    appearance: none;
    background: #666;
  }

  .zoom-value {
    width: 45px;
    padding-left: 6px;
    box-sizing: border-box;
  }
</style>
